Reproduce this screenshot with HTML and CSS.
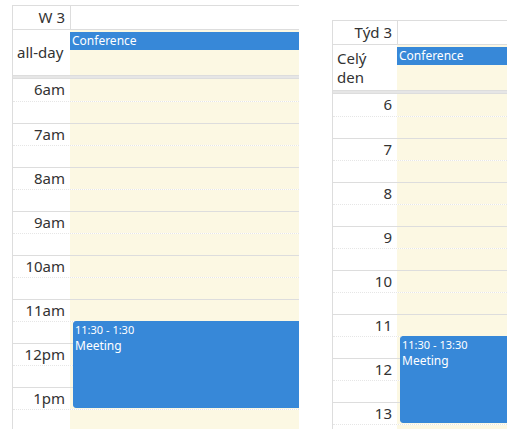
FILE: index.html
```html
<!DOCTYPE html>
<html>
<head>
<meta charset="utf-8">
<link rel="stylesheet" href="styles.css">
</head>
<body>
<div class="wrap">
  <div class="cal cal-en">
    <div class="row head"><div class="axis">W 3</div><div class="day"></div></div>
    <div class="row allday"><div class="axis label">all-day</div><div class="day"><div class="bar">Conference</div></div></div>
    <div class="divider"></div>
    <div class="slots">
      <div class="slot hour"><div class="axis">6am</div><div class="day"></div></div>
      <div class="slot half"><div class="axis"></div><div class="day"></div></div>
      <div class="slot hour"><div class="axis">7am</div><div class="day"></div></div>
      <div class="slot half"><div class="axis"></div><div class="day"></div></div>
      <div class="slot hour"><div class="axis">8am</div><div class="day"></div></div>
      <div class="slot half"><div class="axis"></div><div class="day"></div></div>
      <div class="slot hour"><div class="axis">9am</div><div class="day"></div></div>
      <div class="slot half"><div class="axis"></div><div class="day"></div></div>
      <div class="slot hour"><div class="axis">10am</div><div class="day"></div></div>
      <div class="slot half"><div class="axis"></div><div class="day"></div></div>
      <div class="slot hour"><div class="axis">11am</div><div class="day"></div></div>
      <div class="slot half"><div class="axis"></div><div class="day"></div></div>
      <div class="slot hour"><div class="axis">12pm</div><div class="day"></div></div>
      <div class="slot half"><div class="axis"></div><div class="day"></div></div>
      <div class="slot hour"><div class="axis">1pm</div><div class="day"></div></div>
      <div class="slot half"><div class="axis"></div><div class="day"></div></div>
      <div class="slot hour"><div class="axis"></div><div class="day"></div></div>
      <div class="event">
        <div class="ev-time">11:30 - 1:30</div>
        <div class="ev-title">Meeting</div>
      </div>
    </div>
  </div>

  <div class="cal cal-cs">
    <div class="row head"><div class="axis">Týd 3</div><div class="day"></div></div>
    <div class="row allday"><div class="axis label">Celý den</div><div class="day"><div class="bar">Conference</div></div></div>
    <div class="divider"></div>
    <div class="slots">
      <div class="slot hour"><div class="axis">6</div><div class="day"></div></div>
      <div class="slot half"><div class="axis"></div><div class="day"></div></div>
      <div class="slot hour"><div class="axis">7</div><div class="day"></div></div>
      <div class="slot half"><div class="axis"></div><div class="day"></div></div>
      <div class="slot hour"><div class="axis">8</div><div class="day"></div></div>
      <div class="slot half"><div class="axis"></div><div class="day"></div></div>
      <div class="slot hour"><div class="axis">9</div><div class="day"></div></div>
      <div class="slot half"><div class="axis"></div><div class="day"></div></div>
      <div class="slot hour"><div class="axis">10</div><div class="day"></div></div>
      <div class="slot half"><div class="axis"></div><div class="day"></div></div>
      <div class="slot hour"><div class="axis">11</div><div class="day"></div></div>
      <div class="slot half"><div class="axis"></div><div class="day"></div></div>
      <div class="slot hour"><div class="axis">12</div><div class="day"></div></div>
      <div class="slot half"><div class="axis"></div><div class="day"></div></div>
      <div class="slot hour"><div class="axis">13</div><div class="day"></div></div>
      <div class="slot half"><div class="axis"></div><div class="day"></div></div>
      <div class="event">
        <div class="ev-time">11:30 - 13:30</div>
        <div class="ev-title">Meeting</div>
      </div>
    </div>
  </div>
</div>
</body>
</html>
```

FILE: styles.css
```css
html, body {
  margin: 0;
  padding: 0;
  background: #fff;
  overflow: hidden;
}
body {
  height: 429px;
  font-family: "Noto Sans", "Open Sans", sans-serif;
  color: #333;
}
.wrap {
  display: flex;
  align-items: flex-start;
  height: 429px;
  overflow: hidden;
}
.cal {
  box-sizing: border-box;
  border-left: 1px solid #ddd;
  border-top: 1px solid #ddd;
  overflow: hidden;
  flex: none;
}
.cal-en {
  margin-left: 12px;
  margin-top: 5px;
  width: 287px;
  height: 424px;
  --axis: 57px;
}
.cal-cs {
  margin-left: 33px;
  margin-top: 20px;
  width: 175px;
  height: 409px;
  --axis: 64px;
}
.row, .slot {
  display: grid;
  grid-template-columns: var(--axis) 1fr;
}
.axis {
  border-right: 1px solid #ddd;
  text-align: right;
  padding-right: 5px;
  font-size: 15px;
  box-sizing: border-box;
  width: calc(var(--axis) + 1px);
}
.head {
  border-bottom: 1px solid #ddd;
  box-sizing: border-box;
  height: 24px;
}
.head .axis {
  line-height: 22px;
}
.allday {
  height: 46px;
  border-bottom: 1px solid #ddd;
  box-sizing: border-box;
}
.allday .axis {
  text-align: left;
  padding-left: 4px;
  padding-right: 2px;
  display: flex;
  align-items: center;
  line-height: 19px;
}
.allday .day {
  background: #fcf8e3;
  padding-top: 2px;
}
.bar {
  background: #3788d8;
  border: 1px solid #3788d8;
  color: #fff;
  font-size: 12px;
  line-height: 16px;
  padding: 0 1px;
  white-space: nowrap;
}
.divider {
  height: 2px;
  background: #e6e6e6;
  border-bottom: 1px solid #ddd;
}
.slots {
  position: relative;
}
.slot {
  height: 22px;
  box-sizing: border-box;
}
.slot.half {
  border-top: 1px dotted #e6e6e6;
}
.slot.hour {
  border-top: 1px solid #ddd;
}
.slot:first-child {
  border-top: none;
}
.slot .axis {
  line-height: 21px;
}
.slot .day {
  background: #fcf8e3;
}
.event {
  position: absolute;
  top: 242px;
  height: 87px;
  left: calc(var(--axis) + 3px);
  right: -6px;
  background: #3788d8;
  border: 1px solid #3788d8;
  border-radius: 3px;
  color: #fff;
  padding: 0 1px;
  box-sizing: border-box;
  white-space: nowrap;
}
.ev-time {
  font-size: 11px;
  line-height: 16px;
}
.ev-title {
  font-size: 12px;
  line-height: 16px;
}
```
